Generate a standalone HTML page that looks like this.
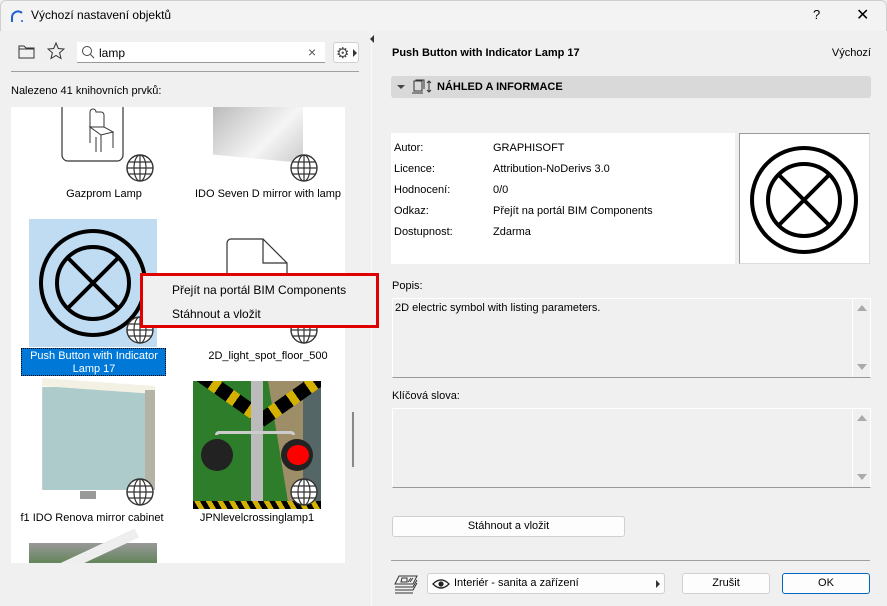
<!DOCTYPE html>
<html><head><meta charset="utf-8"><style>
*{box-sizing:border-box}
body{margin:0;width:887px;height:606px;background:#f0f0f0;font-family:"Liberation Sans",sans-serif;font-size:11px;color:#000;position:relative;overflow:hidden}
.a{position:absolute}
.t{position:absolute;white-space:nowrap}
.btn{position:absolute;background:#fdfdfd;border:1px solid #d0d0d0;border-radius:3px;text-align:center;font-size:11px}
.lbl{position:absolute;width:180px;text-align:center;font-size:11px;white-space:nowrap}
</style></head><body>
<div class="a" style="left:0;top:0;width:887px;height:31px;background:#f3f3f3;border:1px solid #cfcfcf;border-bottom:none;border-radius:6px 6px 0 0"></div>
<svg class="a" style="left:9px;top:8px" width="16" height="16"><path d="M3 14 V9 A6 6 0 0 1 13 5" stroke="#2060d0" stroke-width="2" fill="none"/><circle cx="13" cy="13" r="1" fill="#2060d0"/></svg>
<div class="t" style="left:31px;top:8px;font-size:12px">Výchozí nastavení objektů</div>
<div class="t" style="left:813px;top:7px;font-size:13px">?</div>
<div class="t" style="left:856px;top:5px;font-size:16px">✕</div>
<div class="a" style="left:371px;top:31px;width:1px;height:575px;background:#fafafa"></div>
<div class="a" style="left:370px;top:35px;width:0;height:0;border-top:4px solid transparent;border-bottom:4px solid transparent;border-right:4px solid #333"></div>
<!-- toolbar -->
<svg class="a" style="left:18px;top:44px" width="17" height="15"><path d="M1 2 H6 L8 4 H16 V14 H1 Z M1 5 H16" stroke="#333" fill="none"/></svg>
<svg class="a" style="left:47px;top:42px" width="18" height="18"><path d="M9 1 L11.3 6.5 L17 7 L12.6 10.8 L14 16.5 L9 13.5 L4 16.5 L5.4 10.8 L1 7 L6.7 6.5 Z" stroke="#333" fill="none"/></svg>
<div class="a" style="left:77px;top:42px;width:248px;height:21px;background:#fff;border-bottom:1px solid #999"></div>
<svg class="a" style="left:81px;top:45px" width="15" height="15"><circle cx="6" cy="6" r="4.5" stroke="#444" fill="none"/><path d="M9.5 9.5 L13 13" stroke="#444"/></svg>
<div class="t" style="left:99px;top:46px;font-size:12px">lamp</div>
<div class="t" style="left:308px;top:44px;font-size:14px;color:#555">×</div>
<div class="btn" style="left:333px;top:42px;width:26px;height:21px"><span style="position:absolute;left:2px;top:1px;font-size:15px;color:#444">⚙</span><span style="position:absolute;left:19px;top:6px;border-left:4px solid #333;border-top:4px solid transparent;border-bottom:4px solid transparent"></span></div>
<div class="a" style="left:11px;top:71px;width:348px;height:1px;background:#a0a0a0"></div>
<div class="t" style="left:11px;top:85px">Nalezeno 41 knihovních prvků:</div>
<!-- list -->
<div class="a" style="left:11px;top:107px;width:334px;height:456px;background:#fff;overflow:hidden">
 <svg class="a" style="left:50px;top:0" width="64" height="56"><path d="M1 0 V48 A6 6 0 0 0 7 54 H56 A6 6 0 0 0 62 48 V0" stroke="#333" fill="none" stroke-width="1.2"/><path d="M29 34 V5 A3 3 0 0 1 35 5 H40 A3 3 0 0 1 43 8 V20 M29 20 L43 20 L52 25 L40 28 Z M40 28 V45 M52 25 V41 M29 20 V36 M35 30 V45" stroke="#333" fill="none"/></svg>
 <div class="a" style="left:202px;top:0;width:90px;height:56px;background:linear-gradient(135deg,#bbb,#f5f5f5 60%,#ccc);clip-path:polygon(0 0,100% 0,100% 100%,0 85%)"></div>
 <div class="lbl" style="left:3px;top:81px">Gazprom Lamp</div>
 <div class="lbl" style="left:167px;top:81px">IDO Seven D mirror with lamp</div>
 <div class="a" style="left:18px;top:112px;width:128px;height:128px;background:#bfdcf2"></div>
 <svg class="a" style="left:18px;top:112px" width="128" height="128"><circle cx="64" cy="64" r="52" stroke="#000" stroke-width="4" fill="none"/><circle cx="64" cy="64" r="36" stroke="#000" stroke-width="4" fill="none"/><path d="M38 38 L90 90 M90 38 L38 90" stroke="#000" stroke-width="4"/></svg>
 <svg class="a" style="left:214px;top:130px" width="64" height="50"><path d="M2 50 V6 A4 4 0 0 1 6 2 H38 L62 26 V50 M38 2 V26 H62" stroke="#333" fill="none" stroke-width="1.2"/></svg>
 <div class="a" style="left:10px;top:241px;width:145px;height:28px;background:#0078d7;border:1px dotted #000"></div>
 <div class="lbl" style="left:-7px;top:243px;color:#fff;line-height:13px">Push Button with Indicator<br>Lamp 17</div>
 <div class="lbl" style="left:167px;top:243px">2D_light_spot_floor_500</div>
 <div class="a" style="left:31px;top:280px;width:103px;height:103px;background:#aecbcb;border-left:1px solid #ccc"></div>
 <div class="a" style="left:31px;top:275px;width:113px;height:8px;background:#f3f1e3;transform:skewY(4deg)"></div>
 <div class="a" style="left:134px;top:283px;width:10px;height:100px;background:#b5b3a5"></div>
 <div class="a" style="left:69px;top:384px;width:16px;height:8px;background:#999"></div>
 <div class="lbl" style="left:-9px;top:405px">f1 IDO Renova mirror cabinet</div>
 <div class="a" style="left:182px;top:274px;width:128px;height:128px;background:#2d7d2a;overflow:hidden">
  <div class="a" style="left:75px;top:0;width:53px;height:128px;background:#9e8e68;clip-path:polygon(0 0,100% 0,100% 100%,40% 100%)"></div>
  <div class="a" style="left:110px;top:0;width:18px;height:128px;background:#566"></div>
  <div class="a" style="left:0;top:10px;width:80px;height:14px;background:repeating-linear-gradient(90deg,#000 0 14px,#d4b000 14px 22px);transform:rotate(35deg)"></div>
  <div class="a" style="left:60px;top:10px;width:80px;height:14px;background:repeating-linear-gradient(90deg,#000 0 14px,#d4b000 14px 22px);transform:rotate(-35deg)"></div>
  <div class="a" style="left:58px;top:0;width:12px;height:128px;background:#bbb"></div>
  <div class="a" style="left:22px;top:50px;width:80px;height:4px;border:3px solid #ccc;border-bottom:none;border-radius:5px 5px 0 0"></div>
  <div class="a" style="left:8px;top:58px;width:32px;height:32px;border-radius:50%;background:#222"></div>
  <div class="a" style="left:88px;top:58px;width:32px;height:32px;border-radius:50%;background:#222"></div>
  <div class="a" style="left:94px;top:64px;width:22px;height:20px;border-radius:50%;background:#f00"></div>
  <div class="a" style="left:0;top:120px;width:128px;height:8px;background:repeating-linear-gradient(60deg,#000 0 5px,#d4b000 5px 10px)"></div>
 </div>
 <div class="lbl" style="left:156px;top:405px">JPNlevelcrossinglamp1</div>
 <div class="a" style="left:18px;top:436px;width:128px;height:30px;background:linear-gradient(#999,#497a3a)"></div>
 <div class="a" style="left:40px;top:440px;width:90px;height:10px;background:#eee;transform:rotate(-25deg)"></div>
</div>
<!-- globes -->
<svg width="0" height="0" style="position:absolute"><defs><g id="gl"><circle cx="14" cy="14" r="13" fill="#fff" stroke="#333" stroke-width="1.4"/><ellipse cx="14" cy="14" rx="6" ry="13" fill="none" stroke="#333" stroke-width="1.2"/><path d="M14 1 V27 M1 14 H27 M3 8 H25 M3 20 H25" stroke="#333" stroke-width="1.2"/></g></defs></svg>
<svg class="a" style="left:126px;top:154px" width="29" height="29"><use href="#gl"/></svg>
<svg class="a" style="left:290px;top:154px" width="29" height="29"><use href="#gl"/></svg>
<svg class="a" style="left:126px;top:316px" width="29" height="29"><use href="#gl"/></svg>
<svg class="a" style="left:290px;top:316px" width="29" height="29"><use href="#gl"/></svg>
<svg class="a" style="left:126px;top:478px" width="29" height="29"><use href="#gl"/></svg>
<svg class="a" style="left:290px;top:478px" width="29" height="29"><use href="#gl"/></svg>
<div class="a" style="left:352px;top:412px;width:2px;height:55px;background:#888"></div>
<!-- context menu -->
<div class="a" style="left:140px;top:273px;width:239px;height:55px;background:#f0f0f0;border:3px solid #e00000"></div>
<div class="t" style="left:172px;top:283px;font-size:12px">Přejít na portál BIM Components</div>
<div class="t" style="left:172px;top:307px;font-size:12px">Stáhnout a vložit</div>
<!-- right panel -->
<div class="t" style="left:392px;top:47px;font-weight:bold">Push Button with Indicator Lamp 17</div>
<div class="t" style="right:16px;top:47px">Výchozí</div>
<div class="a" style="left:391px;top:76px;width:480px;height:22px;background:#d9d9d9;border-radius:3px"></div>
<div class="a" style="left:397px;top:85px;border-top:4px solid #444;border-left:4px solid transparent;border-right:4px solid transparent"></div>
<svg class="a" style="left:411px;top:79px" width="22" height="16"><path d="M3 2 H11 V12 H3 Z M1 14 H12 M5 2 V1 H13 V10" stroke="#333" fill="none"/><path d="M18 2 V13 M16 4 L18 2 L20 4 M16 11 L18 13 L20 11" stroke="#333" fill="none"/></svg>
<div class="t" style="left:437px;top:81px;font-weight:bold">NÁHLED A INFORMACE</div>
<div class="a" style="left:391px;top:133px;width:344px;height:131px;background:#fff"></div>
<div class="t" style="left:394px;top:138px;line-height:21px">Autor:<br>Licence:<br>Hodnocení:<br>Odkaz:<br>Dostupnost:</div>
<div class="t" style="left:493px;top:138px;line-height:21px">GRAPHISOFT<br>Attribution-NoDerivs 3.0<br>0/0<br>Přejít na portál BIM Components<br>Zdarma</div>
<div class="a" style="left:739px;top:133px;width:131px;height:131px;background:#fff;border:1px solid #999;border-right-color:#ddd;border-bottom-color:#ddd"></div>
<svg class="a" style="left:739px;top:133px" width="131" height="131"><circle cx="65" cy="67" r="52" stroke="#000" stroke-width="4" fill="none"/><circle cx="65" cy="67" r="36" stroke="#000" stroke-width="4" fill="none"/><path d="M40 42 L90 92 M90 42 L40 92" stroke="#000" stroke-width="4"/></svg>
<div class="t" style="left:392px;top:280px">Popis:</div>
<div class="a" style="left:392px;top:298px;width:479px;height:80px;border:1px solid #fff;border-bottom:1px solid #999"></div>
<div class="a" style="left:852px;top:299px;width:1px;height:78px;background:#fff"></div>
<div class="t" style="left:395px;top:302px">2D electric symbol with listing parameters.</div>
<div class="a" style="left:857px;top:305px;border-bottom:6px solid #aaa;border-left:5px solid transparent;border-right:5px solid transparent"></div>
<div class="a" style="left:857px;top:364px;border-top:6px solid #aaa;border-left:5px solid transparent;border-right:5px solid transparent"></div>
<div class="t" style="left:392px;top:390px">Klíčová slova:</div>
<div class="a" style="left:392px;top:408px;width:479px;height:80px;border:1px solid #fff;border-bottom:1px solid #999"></div>
<div class="a" style="left:852px;top:409px;width:1px;height:78px;background:#fff"></div>
<div class="a" style="left:857px;top:415px;border-bottom:6px solid #aaa;border-left:5px solid transparent;border-right:5px solid transparent"></div>
<div class="a" style="left:857px;top:474px;border-top:6px solid #aaa;border-left:5px solid transparent;border-right:5px solid transparent"></div>
<div class="btn" style="left:392px;top:516px;width:233px;height:21px;line-height:19px">Stáhnout a vložit</div>
<div class="a" style="left:391px;top:560px;width:479px;height:1px;background:#a0a0a0"></div>
<svg class="a" style="left:393px;top:574px" width="26" height="20"><path d="M6 2 H24 L20 10 H2 Z M9 4 H14 V8 H8 Z M15 8 L18 4 M17 8 L20 4" stroke="#333" fill="none"/><path d="M2 13 H20 L24 6 M2 16 H20 L24 9 M2 19 H20" stroke="#333" fill="none"/></svg>
<div class="btn" style="left:427px;top:573px;width:238px;height:21px;text-align:left"><svg class="a" style="left:4px;top:5px" width="18" height="10"><path d="M1 5 Q9 -3 17 5 Q9 13 1 5 Z" stroke="#222" fill="none" stroke-width="1.3"/><circle cx="9" cy="5" r="2.6" fill="#222"/></svg><span style="position:absolute;left:26px;top:3px">Interiér - sanita a zařízení</span><span style="position:absolute;left:228px;top:6px;border-left:4px solid #333;border-top:4px solid transparent;border-bottom:4px solid transparent"></span></div>
<div class="btn" style="left:682px;top:573px;width:88px;height:21px;line-height:19px">Zrušit</div>
<div class="btn" style="left:782px;top:573px;width:88px;height:21px;line-height:19px;border-color:#0067c0">OK</div>
</body></html>
